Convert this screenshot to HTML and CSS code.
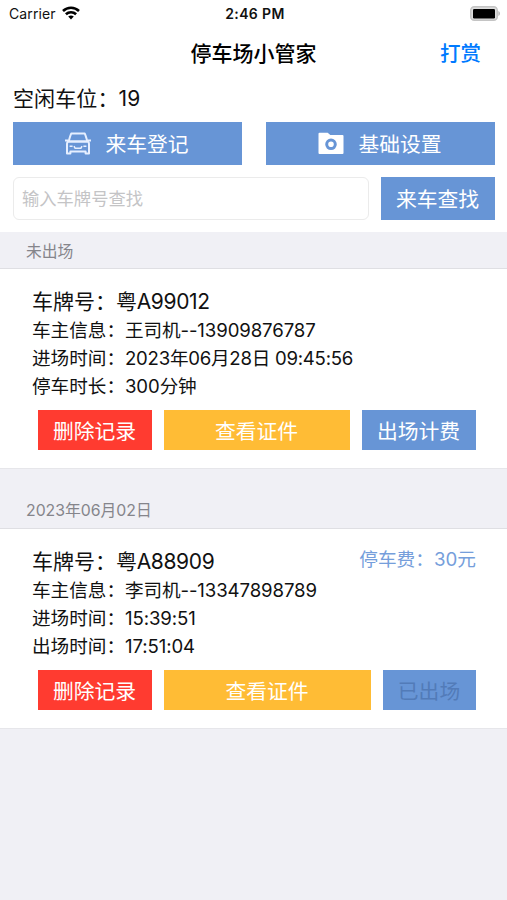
FILE: index.html
```html
<!DOCTYPE html>
<html lang="zh-CN">

<head>
    <title>停车场小管家</title>
    <meta charset="utf-8">
    <meta name="viewport" content="width=device-width, initial-scale=1">
    <link rel="stylesheet" href="styles.css">
</head>

<body>

    <div class="status-bar">
        <div class="carrier">
            <span>Carrier</span>
            <svg width="18" height="14" viewBox="0 0 18 14" fill="none" stroke="#000" stroke-width="2.6">
                <path d="M1 5C5.5.7 12.5.7 17 5" />
                <path d="M3.9 8.3c2.9-2.8 7.3-2.8 10.2 0" />
                <path d="M6.2 10.6c1.7-1.6 3.9-1.6 5.6 0L9 13.5z" fill="#000" stroke="none" />
            </svg>
        </div>
        <span class="time">2:46 PM</span>
        <svg class="battery" width="31" height="15" viewBox="0 0 31 15">
            <rect x=".75" y=".75" width="26.5" height="13.5" rx="3.5" fill="#ddd" stroke="#c4c4c4" stroke-width="1.5" />
            <rect x="3" y="3" width="22" height="9.5" rx="1.2" fill="#000" />
            <path d="M28.3 5c2.3.7 2.3 4.3 0 5z" fill="#bbb" />
        </svg>
    </div>

    <header>
        <h1>停车场小管家</h1>
        <a class="reward" href="#">打赏</a>
    </header>

    <main>

        <p class="free-spaces">空闲车位：19</p>

        <div class="actions">
            <button class="btn">
                <svg width="26" height="23" viewBox="0 0 26 23" fill="none" stroke="#e6efff" stroke-width="2" stroke-linejoin="round">
                    <path d="M3.6 9.4C4.6 6.4 5 4 6.2 1.6h13.6c1.2 2.4 1.6 4.8 2.6 7.8z" />
                    <path d="M2 21.6v-9.4c0-1.6.6-2.8 1.6-2.8h18.8c1 0 1.6 1.2 1.6 2.8v9.4h-3.4v-2.2H5.4v2.2z" />
                    <path d="M0 8.6h3M23 8.6h3" />
                    <path d="M4.6 14.2h3M18.4 14.2h3M9 14.2l1 2h6l1-2" stroke-width="1.5" />
                </svg>
                <span>来车登记</span>
            </button>
            <button class="btn">
                <svg width="26" height="23" viewBox="0 0 26 23">
                    <path d="M1.5.8h8.2l2.6 2.1h12.2a1 1 0 0 1 1 1v17a1 1 0 0 1-1 1h-23a1 1 0 0 1-1-1V1.8a1 1 0 0 1 1-1z" fill="#fff" />
                    <circle cx="13" cy="12.3" r="4.3" fill="#fff" stroke="#6795d6" stroke-width="3" />
                </svg>
                <span>基础设置</span>
            </button>
        </div>

        <form class="search" action="#">
            <input name="plate" placeholder="输入车牌号查找">
            <button class="btn" type="button">来车查找</button>
        </form>

        <h2>未出场</h2>
        <section class="record">
            <p class="plate">车牌号：<span class="value">粤A99012</span></p>
            <p>车主信息：<span class="value">王司机--13909876787</span></p>
            <p>进场时间：<span class="value datetime">2023年06月28日 09:45:56</span></p>
            <p>停车时长：<span class="value">300分钟</span></p>
            <div class="buttons">
                <button class="btn delete">删除记录</button>
                <button class="btn view">查看证件</button>
                <button class="btn checkout">出场计费</button>
            </div>
        </section>

        <h2 class="date">2023年06月02日</h2>
        <section class="record">
            <div class="top">
                <p class="plate">车牌号：<span class="value">粤A88909</span></p>
                <span class="fee">停车费：30元</span>
            </div>
            <p>车主信息：<span class="value">李司机--13347898789</span></p>
            <p>进场时间：<span class="value">15:39:51</span></p>
            <p>出场时间：<span class="value">17:51:04</span></p>
            <div class="buttons">
                <button class="btn delete">删除记录</button>
                <button class="btn view">查看证件</button>
                <button class="btn done" disabled>已出场</button>
            </div>
        </section>

    </main>

</body>

</html>
```

FILE: styles.css
```css
:root {
    --blue: #6795d6;
    --red: #ff3b30;
    --yellow: #ffbc35;
    --grey: #f0f0f5;
}

* {
    box-sizing: border-box;
}

body {
    background-color: var(--grey);
    color: #111;
    font-family: Inter, "Noto Sans CJK SC", sans-serif;
    margin: 0;
    min-height: 900px;
}

h1,
h2,
p {
    margin: 0;
}

.status-bar {
    align-items: center;
    background-color: #fff;
    display: grid;
    font-size: 14px;
    grid-template-columns: 1fr auto 1fr;
    height: 28px;
    padding: 0 6px 2px 9px;
}

.carrier {
    align-items: center;
    display: flex;
    gap: 6px;
    letter-spacing: 0.1px;
}

.time {
    font-size: 14px;
    font-weight: 600;
    letter-spacing: 0.35px;
}

.battery {
    justify-self: end;
}

header {
    align-items: center;
    background-color: #fff;
    display: grid;
    grid-template-columns: 1fr auto 1fr;
    height: 50px;
    padding: 0 26px;
}

h1 {
    color: #000;
    font-size: 21px;
    font-weight: 500;
    grid-column: 2;
    line-height: 50px;
}

.reward {
    color: #007aff;
    font-size: 20.5px;
    font-weight: 500;
    justify-self: end;
    line-height: 51px;
    text-decoration: none;
}

.free-spaces {
    background-color: #fff;
    font-size: 21px;
    height: 44px;
    letter-spacing: 0.1px;
    line-height: 41px;
    padding: 0 13px;
}

.btn {
    align-items: center;
    background-color: var(--blue);
    border: 0;
    color: #fff;
    display: flex;
    font-family: inherit;
    font-size: 20.8px;
    justify-content: center;
    padding: 0 1px 1px 0;
}

.actions {
    background-color: #fff;
    display: flex;
    gap: 24px;
    padding: 0 12px 12px 13px;
}

.actions .btn {
    flex: 1;
    gap: 14px;
    height: 43px;
}

.actions svg {
    margin-top: 1px;
}

.search {
    background-color: #fff;
    display: flex;
    gap: 12px;
    padding: 0 12px 12px 13px;
}

.search input {
    border: 1px solid #ebebeb;
    border-radius: 6px;
    flex: 1;
    font-family: inherit;
    font-size: 17.3px;
    height: 43px;
    min-width: 0;
    padding: 0 8px;
}

.search input::placeholder {
    color: #c4c4c6;
}

.search .btn {
    height: 43px;
    width: 114px;
}

h2 {
    border-bottom: 1px solid #dfdfe3;
    color: #85858b;
    font-size: 15.8px;
    font-weight: 400;
    height: 37px;
    line-height: 39px;
    padding-left: 26px;
}

h2.date {
    height: 60px;
    line-height: 24px;
    padding-top: 30px;
}

.record {
    background-color: #fff;
    border-bottom: 1px solid #e6e6ea;
    height: 200px;
    padding: 17px 31px 0 32px;
}

.record p {
    font-size: 18.6px;
    height: 28px;
    line-height: 29px;
    white-space: nowrap;
}

.record .plate {
    font-size: 21px;
    height: 30px;
    line-height: 31px;
}

.value {
    letter-spacing: -0.1px;
}

.datetime {
    letter-spacing: -0.25px;
}

.plate .value {
    letter-spacing: -0.35px;
}

.top {
    display: flex;
    justify-content: space-between;
}

.fee {
    color: #759edb;
    font-size: 18.7px;
    line-height: 28px;
}

.buttons {
    display: flex;
    gap: 12px;
    margin-top: 10px;
    padding-left: 6px;
}

.buttons .btn {
    height: 40px;
    width: 114px;
}

.buttons .delete {
    background-color: var(--red);
}

.buttons .view {
    background-color: var(--yellow);
    flex: 1;
}

.buttons .done {
    color: #527bb8;
    width: 93px;
}
```
